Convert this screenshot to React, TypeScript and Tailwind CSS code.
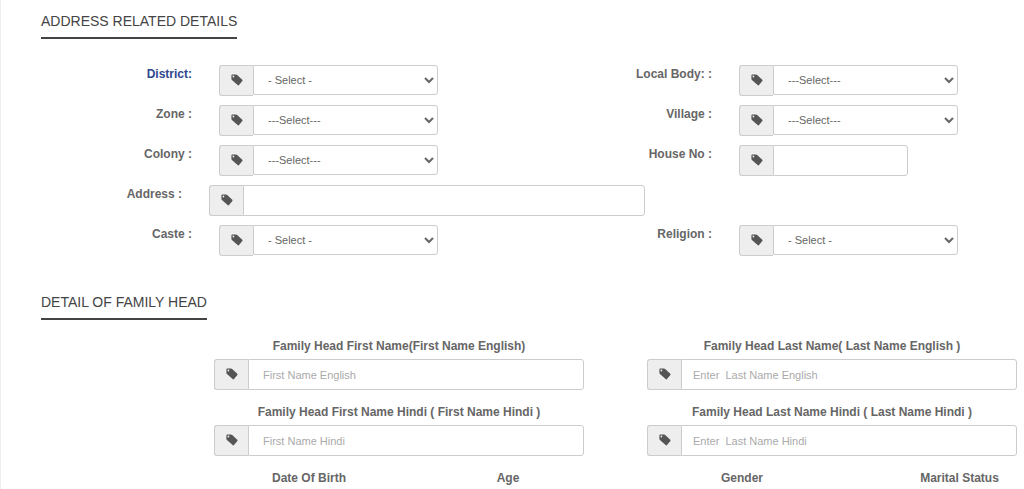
import type { ReactNode } from 'react';
import { clsx } from 'clsx';

interface FieldProps {
    /** Id shared by the label and its control */
    id: string;
    label: string;
    labelClassName?: string;
    className?: string;
    children: ReactNode;
}

const controlClass =
    'min-w-0 flex-1 rounded-r-[3px] border border-[#ccc] bg-white text-[#666] outline-none focus:border-sky-400';

function TagIcon() {
    return (
        <svg viewBox="0 0 12 12" className="h-3 w-3 fill-[#555]" aria-hidden="true">
            <path
                fillRule="evenodd"
                d="M.4 1.5Q.4.5 1.4.5H5Q5.7.5 6.2.9L11.3 5.7Q11.8 6.3 11.4 6.9L8 11.1Q7.5 11.7 6.9 11.2L.9 6Q.4 5.5.4 4.8ZM2.4 1.6A.9.9 0 1 0 2.4 3.4A.9.9 0 1 0 2.4 1.6Z"
            />
        </svg>
    );
}

/** Gray box with a tag that sits in front of every control */
function InputGroup({ className, children }: { className?: string; children: ReactNode }) {
    return (
        <div className={clsx('flex items-start', className)}>
            <span className="flex h-[31px] w-[34px] shrink-0 items-center justify-center rounded-l-[3px] border border-r-0 border-[#ccc] bg-[#eee] pb-0.5">
                <TagIcon />
            </span>
            {children}
        </div>
    );
}

function Field({ id, label, labelClassName, className, children }: FieldProps) {
    return (
        <div className="flex items-start gap-[27px]">
            <label
                htmlFor={id}
                className={clsx(
                    'shrink-0 text-right text-xs leading-[18px] font-bold',
                    labelClassName ?? 'w-[191px]',
                )}
            >
                {label}
            </label>
            <InputGroup className={clsx('min-w-0 flex-1', className)}>{children}</InputGroup>
        </div>
    );
}

function SelectField({
    id,
    label,
    option,
    labelClassName,
}: {
    id: string;
    label: string;
    option: string;
    labelClassName?: string;
}) {
    return (
        <Field id={id} label={label} labelClassName={labelClassName}>
            <select id={id} className={clsx(controlClass, 'h-[30px] pr-0.5 pl-[10px] text-[11px]')}>
                <option>{option}</option>
            </select>
        </Field>
    );
}

function NameField({
    id,
    label,
    placeholder,
    inputClassName,
}: {
    id: string;
    label: string;
    placeholder: string;
    inputClassName: string;
}) {
    return (
        <div>
            <label htmlFor={id} className="block pb-1 text-center text-xs leading-[18px] font-bold">
                {label}
            </label>
            <InputGroup>
                <input
                    id={id}
                    type="text"
                    placeholder={placeholder}
                    className={clsx(
                        controlClass,
                        'h-[31px] text-[11px] placeholder:text-[#aaa]',
                        inputClassName,
                    )}
                />
            </InputGroup>
        </div>
    );
}

function SectionTitle({ children }: { children: ReactNode }) {
    return (
        <h2 className="ml-10 w-fit border-b-2 border-[#444] pb-1.5 text-sm leading-5 text-[#444]">
            {children}
        </h2>
    );
}

export default function App() {
    return (
        <form className="border-l border-[#eee] bg-white pt-[11px] font-['Liberation_Sans',Arial,sans-serif] text-[#666]">
            <section>
                <SectionTitle>ADDRESS RELATED DETAILS</SectionTitle>
                <div className="mt-[26px] grid grid-cols-2 gap-x-[83px] gap-y-[9px] pr-[66px]">
                    <SelectField
                        id="district"
                        label="District:"
                        option="- Select -"
                        labelClassName="w-[191px] text-[#2f4890]"
                    />
                    <SelectField id="local-body" label="Local Body: :" option="---Select---" />
                    <SelectField id="zone" label="Zone :" option="---Select---" />
                    <SelectField id="village" label="Village :" option="---Select---" />
                    <SelectField id="colony" label="Colony :" option="---Select---" />
                    <Field id="house-no" label="House No :" className="mr-[50px]">
                        <input
                            id="house-no"
                            type="text"
                            className={clsx(controlClass, 'h-[31px] px-3 text-[11px]')}
                        />
                    </Field>
                    <div className="col-span-2">
                        <Field
                            id="address"
                            label="Address :"
                            labelClassName="w-[181px]"
                            className="max-w-[436px]"
                        >
                            <input
                                id="address"
                                type="text"
                                className={clsx(controlClass, 'h-[31px] px-3 text-[11px]')}
                            />
                        </Field>
                    </div>
                    <SelectField id="caste" label="Caste :" option="- Select -" />
                    <SelectField id="religion" label="Religion :" option="- Select -" />
                </div>
            </section>

            <section className="mt-9">
                <SectionTitle>DETAIL OF FAMILY HEAD</SectionTitle>
                <div className="mt-[17px] grid grid-cols-2 gap-x-[63px] gap-y-[13px] pr-[7px] pl-[213px]">
                    <NameField
                        id="first-name-english"
                        label="Family Head First Name(First Name English)"
                        placeholder="First Name English"
                        inputClassName="px-[14px]"
                    />
                    <NameField
                        id="last-name-english"
                        label="Family Head Last Name( Last Name English )"
                        placeholder="Enter  Last Name English"
                        inputClassName="px-[11px]"
                    />
                    <NameField
                        id="first-name-hindi"
                        label="Family Head First Name Hindi ( First Name Hindi )"
                        placeholder="First Name Hindi"
                        inputClassName="px-[14px]"
                    />
                    <NameField
                        id="last-name-hindi"
                        label="Family Head Last Name Hindi ( Last Name Hindi )"
                        placeholder="Enter  Last Name Hindi"
                        inputClassName="px-[11px]"
                    />
                    <div className="flex justify-between pb-1 text-center text-xs leading-[18px] font-bold">
                        <span className="w-[190px]">Date Of Birth</span>
                        <span className="w-[152px]">Age</span>
                    </div>
                    <div className="flex justify-between pb-1 text-center text-xs leading-[18px] font-bold">
                        <span className="w-[190px]">Gender</span>
                        <span className="w-[115px]">Marital Status</span>
                    </div>
                </div>
            </section>
        </form>
    );
}
